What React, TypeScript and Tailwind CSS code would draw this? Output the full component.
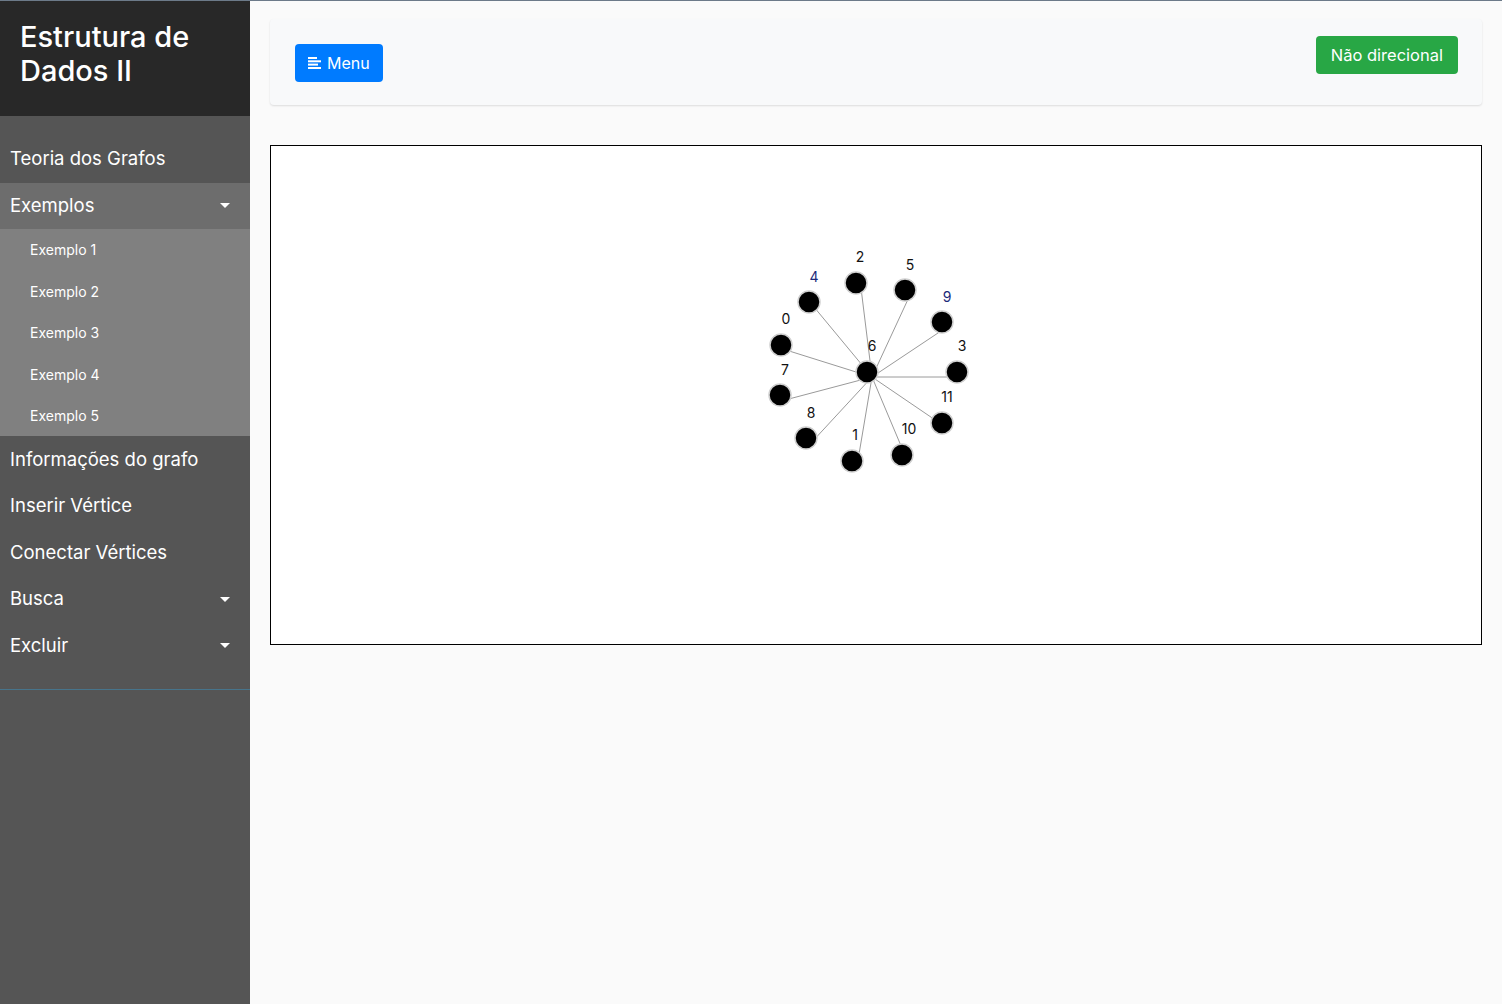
import React from "react";

const nodes = [
  { id: 6, x: 867, y: 372, lx: 872, ly: 346 },
  { id: 4, x: 809, y: 302, lx: 814, ly: 277, c: "#1c2a7a" },
  { id: 2, x: 856, y: 283, lx: 860, ly: 257 },
  { id: 5, x: 905, y: 290, lx: 910, ly: 265 },
  { id: 9, x: 942, y: 322, lx: 947, ly: 297, c: "#1c2a7a" },
  { id: 0, x: 781, y: 345, lx: 786, ly: 319 },
  { id: 3, x: 957, y: 372, lx: 962, ly: 346 },
  { id: 7, x: 780, y: 395, lx: 785, ly: 370 },
  { id: 11, x: 942, y: 423, lx: 947, ly: 397 },
  { id: 8, x: 806, y: 438, lx: 811, ly: 413 },
  { id: 10, x: 902, y: 455, lx: 909, ly: 429 },
  { id: 1, x: 852, y: 461, lx: 855, ly: 435 },
];

// canvas top-left (inside border)
const OX = 271;
const OY = 146;

function Caret() {
  return (
    <span className="ml-auto mr-[10px] h-0 w-0 border-x-[5px] border-t-[5px] border-x-transparent border-t-white" />
  );
}

function Item({ label, caret, active }: { label: string; caret?: boolean; active?: boolean }) {
  return (
    <div className={`flex h-[46.6px] items-center px-[10px] text-[18.5px] text-white ${active ? "bg-[#6d6d6d]" : ""}`}>
      <span>{label}</span>
      {caret && <Caret />}
    </div>
  );
}

function Graph() {
  const hub = nodes[0];
  return (
    <svg className="absolute left-0 top-0" width={1210} height={498}>
      {nodes.slice(1).map((n) => (
        <line
          key={n.id}
          x1={hub.x + 5 - OX}
          y1={hub.y + 5 - OY}
          x2={n.x + 5 - OX}
          y2={n.y + 5 - OY}
          stroke="#9a9a9a"
          strokeWidth={1}
        />
      ))}
      {nodes.map((n) => (
        <g key={n.id}>
          <circle cx={n.x - OX} cy={n.y - OY} r={11} fill="#000" stroke="#d0d0d0" strokeWidth={1.5} />
          <text
            x={n.lx - OX}
            y={n.ly - OY + 5}
            textAnchor="middle"
            fontSize={14}
            fill={n.c ?? "#111"}
            fontFamily="Inter, sans-serif"
          >
            {n.id}
          </text>
        </g>
      ))}
    </svg>
  );
}

export default function App() {
  return (
    <div className="flex min-h-[1004px] border-t border-[#6c7a89] bg-[#fafafa] font-['Inter',sans-serif]">
      {/* sidebar */}
      <aside className="w-[250px] shrink-0 bg-[#555555]">
        <div className="h-[115px] bg-[#282828] px-[20px] pt-[19px] text-[29px] font-medium leading-[34px] text-white">
          Estrutura de
          <br />
          Dados II
        </div>
        <nav className="border-b border-[#47748b] pb-[20px] pt-[20px]">
          <Item label="Teoria dos Grafos" />
          <Item label="Exemplos" caret active />
          <div className="bg-[#808080] text-[14px] text-white">
            {[1, 2, 3, 4, 5].map((i) => (
              <div key={i} className="flex h-[41.4px] items-center pl-[30px]">
                Exemplo {i}
              </div>
            ))}
          </div>
          <Item label="Informações do grafo" />
          <Item label="Inserir Vértice" />
          <Item label="Conectar Vértices" />
          <Item label="Busca" caret />
          <Item label="Excluir" caret />
        </nav>
      </aside>

      {/* content */}
      <main className="flex-1 px-[20px] pt-[18px]">
        <div className="flex h-[86px] items-start rounded-sm bg-[#f8f9fa] pl-[25px] pr-[24px] shadow-[0_1px_2px_rgba(0,0,0,0.12)]">
          <button className="mt-[25px] flex h-[38px] items-center gap-[6px] rounded-[4px] bg-[#007bff] px-[13px] text-[16px] text-white">
            <svg width="13" height="12" viewBox="0 0 13 12" fill="#fff">
              <rect x="0" y="0" width="9" height="2" />
              <rect x="0" y="3.3" width="13" height="2" />
              <rect x="0" y="6.6" width="10" height="2" />
              <rect x="0" y="10" width="13" height="2" />
            </svg>
            Menu
          </button>
          <button className="ml-auto mt-[17px] flex h-[38px] items-center rounded-[4px] bg-[#28a745] px-[15px] text-[16.5px] text-white">
            Não direcional
          </button>
        </div>

        <div className="relative mt-[40px] h-[500px] border border-black bg-white">
          <Graph />
        </div>
      </main>
    </div>
  );
}
